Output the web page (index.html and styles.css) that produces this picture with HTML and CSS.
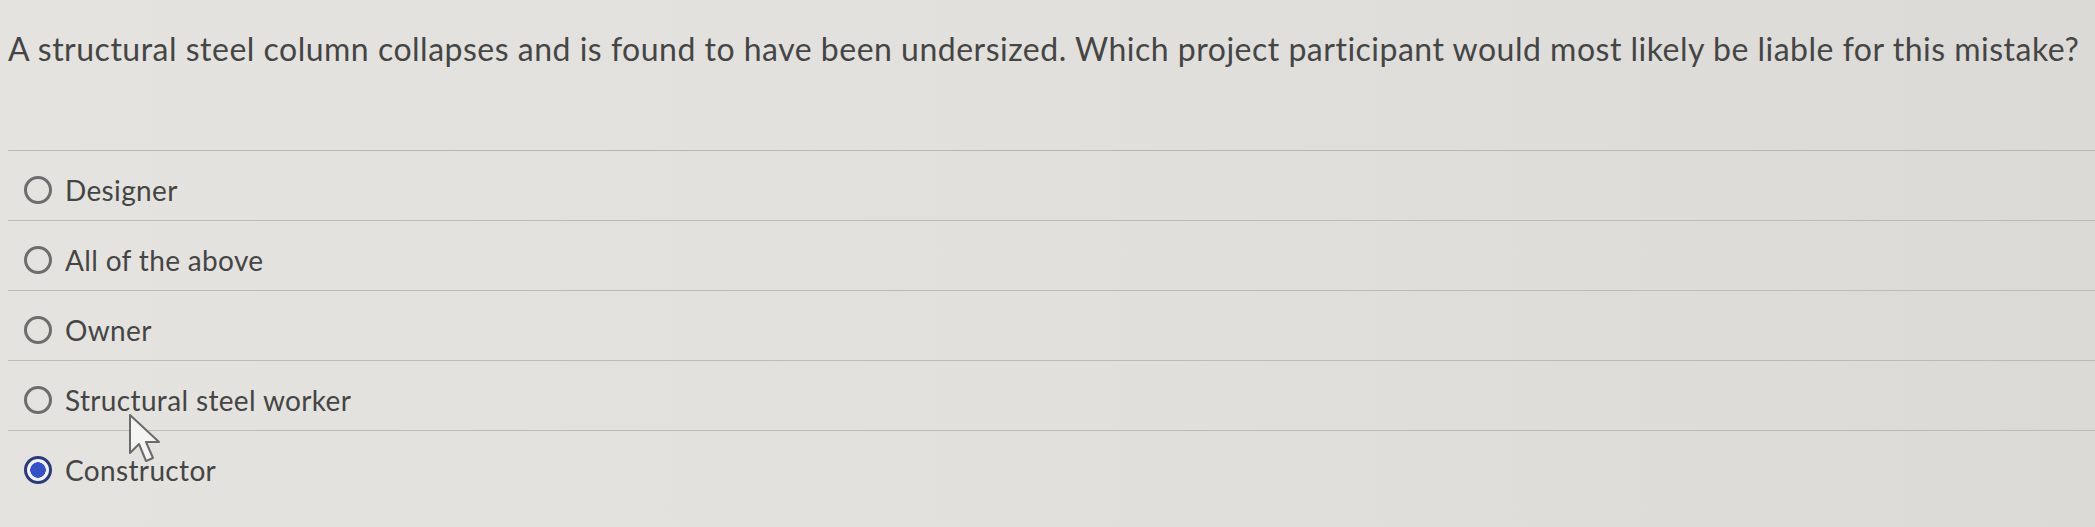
FILE: index.html
```html
<!DOCTYPE html>
<html>
<head>
<meta charset="utf-8">
<link rel="stylesheet" href="styles.css">
</head>
<body>
<div class="page">
  <div class="question">A structural steel column collapses and is found to have been undersized. Which project participant would most likely be liable for this mistake?</div>
  <div class="options">
    <label class="option"><span class="radio"></span><span class="label">Designer</span></label>
    <label class="option"><span class="radio"></span><span class="label">All of the above</span></label>
    <label class="option"><span class="radio"></span><span class="label">Owner</span></label>
    <label class="option"><span class="radio"></span><span class="label">Structural steel worker</span></label>
    <label class="option last"><span class="radio checked"></span><span class="label">Constructor</span></label>
  </div>
  <svg class="cursor" width="36" height="52" viewBox="0 0 36 52">
    <path d="M2 2 L2 40 L11 31 L18 48 L25 45 L18 29 L31 29 Z" fill="#f4f4f2" stroke="#6a6a6a" stroke-width="2" stroke-linejoin="round"/>
  </svg>
</div>
</body>
</html>
```
FILE: styles.css
```css
html, body {
  margin: 0;
  padding: 0;
}
body {
  width: 2095px;
  height: 527px;
  overflow: hidden;
  background: linear-gradient(90deg, #e4e3df 0%, #e1e0dc 50%, #dbdad7 100%);
  font-family: Lato, "Liberation Sans", sans-serif;
  color: #454545;
}
.page {
  position: relative;
  padding-left: 8px;
}
.question {
  font-size: 32px;
  line-height: 38px;
  letter-spacing: 0.5px;
  padding: 30px 0 82px;
  border-bottom: 1px solid #b8b7b2;
  white-space: nowrap;
}
.options {
  display: flex;
  flex-direction: column;
}
.option {
  display: flex;
  align-items: center;
  height: 70px;
  padding-top: 8px;
  box-sizing: border-box;
  border-bottom: 1px solid #bcbbb7;
  gap: 13px;
  padding-left: 16px;
}
.option.last {
  border-bottom: none;
}
.radio {
  width: 22px;
  height: 22px;
  border: 3.5px solid #6d6d6d;
  border-radius: 50%;
  flex: none;
  box-sizing: content-box;
}
.radio.checked {
  border-color: #2b3a78;
  background: radial-gradient(circle, #3553c4 0 7.5px, #f2f2f6 8px);
}
.label {
  font-size: 28px;
  line-height: 32px;
  letter-spacing: 0.35px;
}
.cursor {
  position: absolute;
  left: 128px;
  top: 413px;
}
```
